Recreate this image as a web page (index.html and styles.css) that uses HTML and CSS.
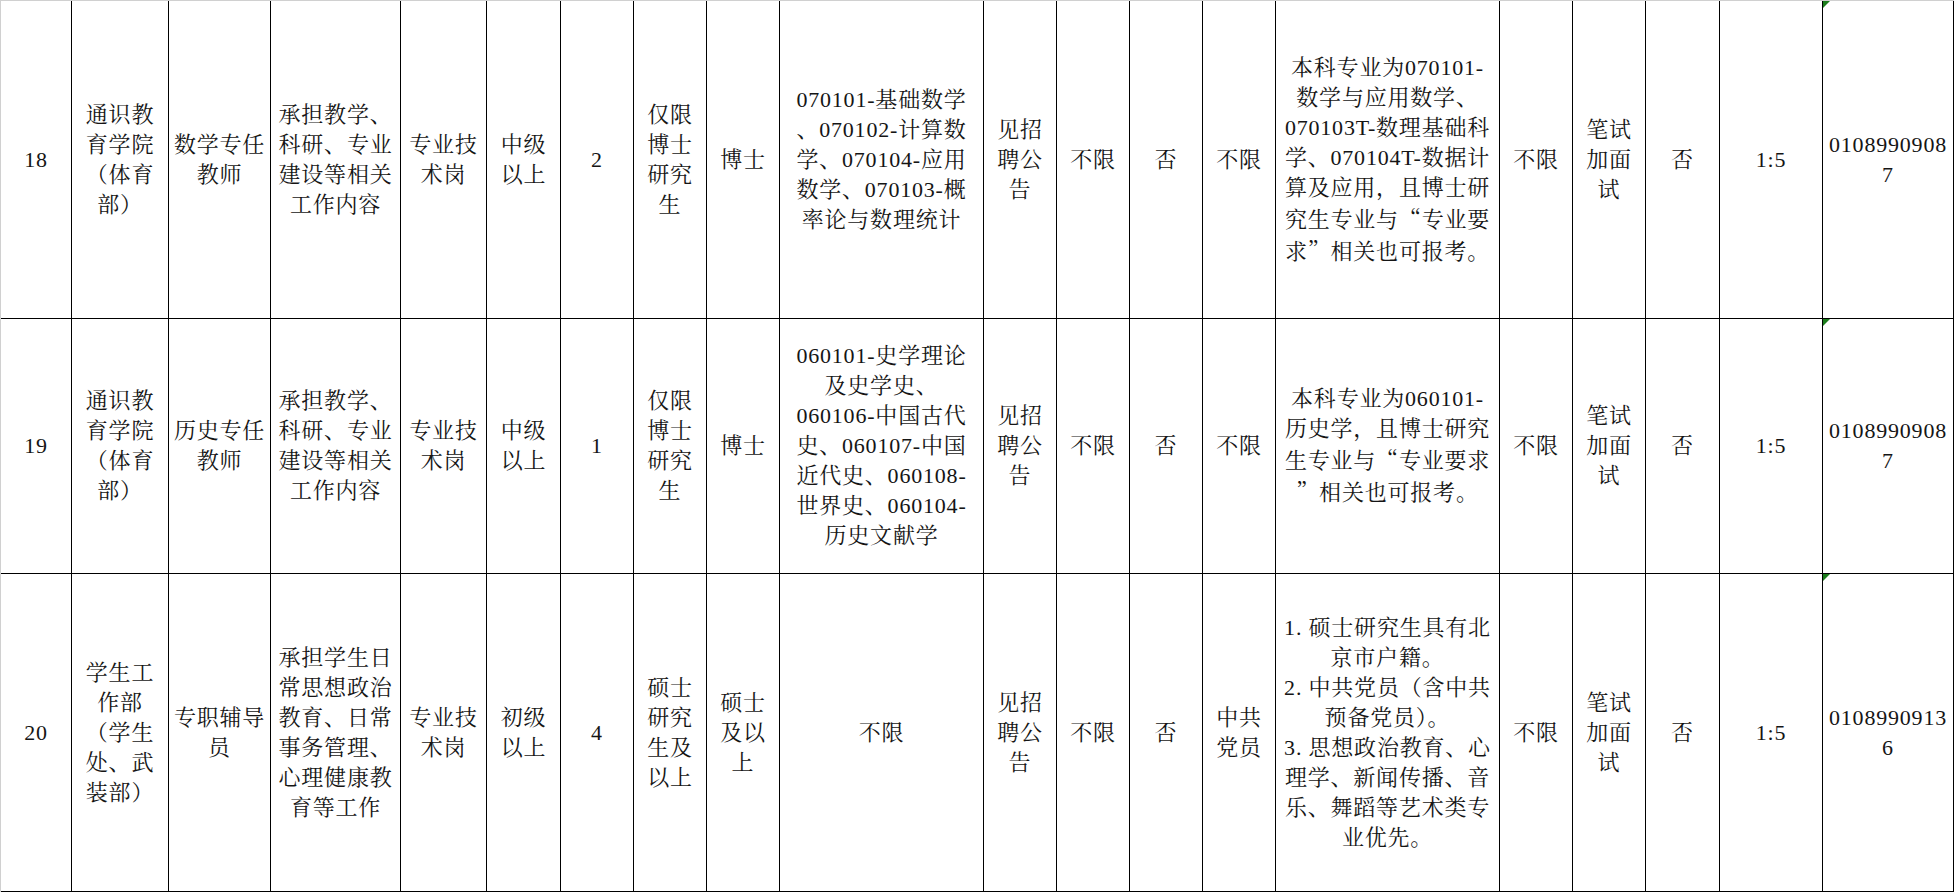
FILE: index.html
```html
<!DOCTYPE html>
<html lang="zh-CN">
<head>
<meta charset="utf-8">
<title>招聘岗位表</title>
<link rel="stylesheet" href="styles.css">
</head>
<body>
<div class="sheet">
  <!-- Row 18 -->
  <div class="row r-tall">
    <div class="cell"><div class="t">18</div></div>
    <div class="cell"><div class="t">通识教<br>育学院<br>（体育<br>部）</div></div>
    <div class="cell"><div class="t">数学专任<br>教师</div></div>
    <div class="cell"><div class="t">承担教学、<br>科研、专业<br>建设等相关<br>工作内容</div></div>
    <div class="cell"><div class="t">专业技<br>术岗</div></div>
    <div class="cell"><div class="t">中级<br>以上</div></div>
    <div class="cell"><div class="t">2</div></div>
    <div class="cell"><div class="t">仅限<br>博士<br>研究<br>生</div></div>
    <div class="cell"><div class="t">博士</div></div>
    <div class="cell"><div class="t">070101-基础数学<br>、070102-计算数<br>学、070104-应用<br>数学、070103-概<br>率论与数理统计</div></div>
    <div class="cell"><div class="t">见招<br>聘公<br>告</div></div>
    <div class="cell"><div class="t">不限</div></div>
    <div class="cell"><div class="t">否</div></div>
    <div class="cell"><div class="t">不限</div></div>
    <div class="cell"><div class="t">本科专业为070101-<br>数学与应用数学、<br>070103T-数理基础科<br>学、070104T-数据计<br>算及应用，且博士研<br>究生专业与<span class="cj">“</span>专业要<br>求<span class="cj">”</span>相关也可报考。</div></div>
    <div class="cell"><div class="t">不限</div></div>
    <div class="cell"><div class="t">笔试<br>加面<br>试</div></div>
    <div class="cell"><div class="t">否</div></div>
    <div class="cell"><div class="t">1:5</div></div>
    <div class="cell"><span class="flag"></span><div class="t">0108990908<br>7</div></div>
  </div>
  <!-- Row 19 -->
  <div class="row r-mid">
    <div class="cell"><div class="t">19</div></div>
    <div class="cell"><div class="t">通识教<br>育学院<br>（体育<br>部）</div></div>
    <div class="cell"><div class="t">历史专任<br>教师</div></div>
    <div class="cell"><div class="t">承担教学、<br>科研、专业<br>建设等相关<br>工作内容</div></div>
    <div class="cell"><div class="t">专业技<br>术岗</div></div>
    <div class="cell"><div class="t">中级<br>以上</div></div>
    <div class="cell"><div class="t">1</div></div>
    <div class="cell"><div class="t">仅限<br>博士<br>研究<br>生</div></div>
    <div class="cell"><div class="t">博士</div></div>
    <div class="cell"><div class="t">060101-史学理论<br>及史学史、<br>060106-中国古代<br>史、060107-中国<br>近代史、060108-<br>世界史、060104-<br>历史文献学</div></div>
    <div class="cell"><div class="t">见招<br>聘公<br>告</div></div>
    <div class="cell"><div class="t">不限</div></div>
    <div class="cell"><div class="t">否</div></div>
    <div class="cell"><div class="t">不限</div></div>
    <div class="cell"><div class="t">本科专业为060101-<br>历史学，且博士研究<br>生专业与<span class="cj">“</span>专业要求<br><span class="cj">”</span>相关也可报考。</div></div>
    <div class="cell"><div class="t">不限</div></div>
    <div class="cell"><div class="t">笔试<br>加面<br>试</div></div>
    <div class="cell"><div class="t">否</div></div>
    <div class="cell"><div class="t">1:5</div></div>
    <div class="cell"><span class="flag"></span><div class="t">0108990908<br>7</div></div>
  </div>
  <!-- Row 20 -->
  <div class="row r-tall">
    <div class="cell"><div class="t">20</div></div>
    <div class="cell"><div class="t">学生工<br>作部<br>（学生<br>处、武<br>装部）</div></div>
    <div class="cell"><div class="t">专职辅导<br>员</div></div>
    <div class="cell"><div class="t">承担学生日<br>常思想政治<br>教育、日常<br>事务管理、<br>心理健康教<br>育等工作</div></div>
    <div class="cell"><div class="t">专业技<br>术岗</div></div>
    <div class="cell"><div class="t">初级<br>以上</div></div>
    <div class="cell"><div class="t">4</div></div>
    <div class="cell"><div class="t">硕士<br>研究<br>生及<br>以上</div></div>
    <div class="cell"><div class="t">硕士<br>及以<br>上</div></div>
    <div class="cell"><div class="t">不限</div></div>
    <div class="cell"><div class="t">见招<br>聘公<br>告</div></div>
    <div class="cell"><div class="t">不限</div></div>
    <div class="cell"><div class="t">否</div></div>
    <div class="cell"><div class="t">中共<br>党员</div></div>
    <div class="cell"><div class="t">1. 硕士研究生具有北<br>京市户籍。<br>2. 中共党员（含中共<br>预备党员）。<br>3. 思想政治教育、心<br>理学、新闻传播、音<br>乐、舞蹈等艺术类专<br>业优先。</div></div>
    <div class="cell"><div class="t">不限</div></div>
    <div class="cell"><div class="t">笔试<br>加面<br>试</div></div>
    <div class="cell"><div class="t">否</div></div>
    <div class="cell"><div class="t">1:5</div></div>
    <div class="cell"><span class="flag"></span><div class="t">0108990913<br>6</div></div>
  </div>
</div>
</body>
</html>
```

FILE: styles.css
```css
html, body {
  margin: 0;
  padding: 0;
  background: #ffffff;
}

.sheet {
  width: 1954px;
  height: 892px;
  box-sizing: border-box;
  border-top: 1px solid #d0d0d0;
  border-left: 1px solid #d0d0d0;
  display: flex;
  flex-direction: column;
  font-family: "Liberation Serif", "Noto Serif CJK SC", "Noto Sans CJK SC", serif;
  font-size: 22px;
  line-height: 30px;
  color: #151515;
  overflow: hidden;
}

.row {
  display: grid;
  grid-template-columns: 71px 97px 102px 130px 86px 74px 73px 73px 73px 204px 73px 73px 73px 73px 224px 73px 73px 74px 103px 131px;
}

.r-tall { height: 318px; }
.r-mid { height: 255px; }

.cell {
  box-sizing: border-box;
  border-right: 1px solid #000000;
  border-bottom: 1px solid #000000;
  display: flex;
  align-items: center;
  justify-content: center;
  position: relative;
}

.t {
  text-align: center;
  white-space: nowrap;
  letter-spacing: 0.8px;
}

.cj {
  font-family: "Noto Serif CJK SC", "Noto Sans CJK SC", sans-serif;
}

.flag {
  position: absolute;
  top: 0;
  left: 0;
  width: 0;
  height: 0;
  border-top: 7px solid #1c7d1c;
  border-right: 7px solid transparent;
}
```
